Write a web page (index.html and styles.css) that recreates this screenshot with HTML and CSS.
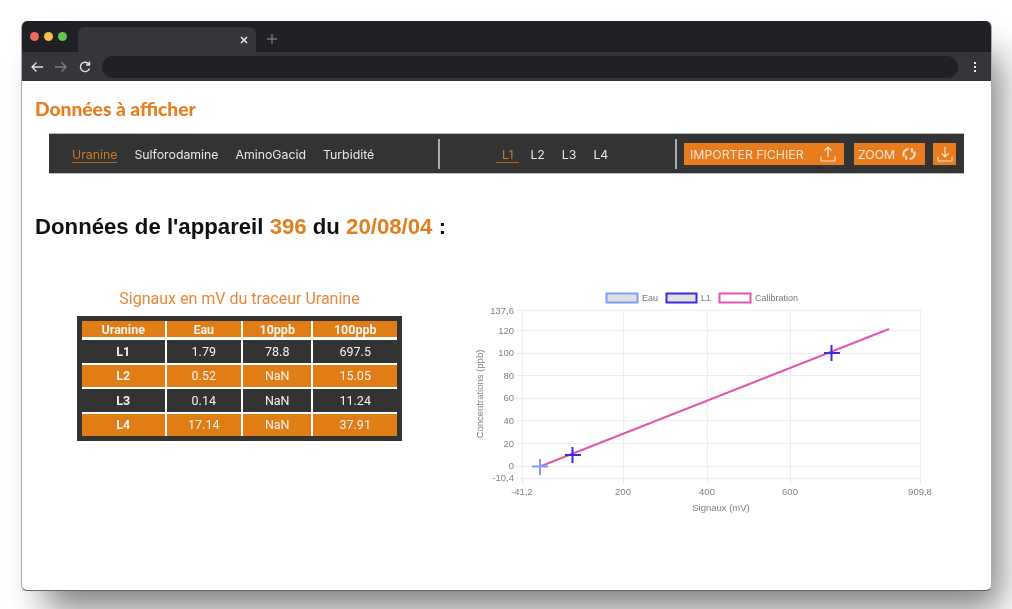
FILE: index.html
```html
<!DOCTYPE html>
<html>
<head>
  <meta charset="utf-8">
  <title>Données à afficher</title>
  <link rel="stylesheet" href="styles.css">
</head>
<body>

  <div class="window">

    <div class="tabbar">
      <div class="dots">
        <span class="dot red"></span>
        <span class="dot yellow"></span>
        <span class="dot green"></span>
      </div>
      <div class="tab">
        <svg class="tab-close" width="8" height="8" viewBox="0 0 8 8"><path d="M1 1l6 6M7 1l-6 6" /></svg>
      </div>
      <svg class="tab-plus" width="12" height="12" viewBox="0 0 12 12"><path d="M6 1v10M1 6h10" /></svg>
    </div>

    <div class="toolbar">
      <svg class="tool" width="14" height="14" viewBox="0 0 14 14"><path d="M13 7H2M6.500 2.500L2 7l4.500 4.500" /></svg>
      <svg class="tool off" width="14" height="14" viewBox="0 0 14 14"><path d="M1 7h11M7.500 2.500L12 7l-4.500 4.500" /></svg>
      <svg class="tool" width="14" height="14" viewBox="0 0 14 14"><path d="M11.500 8.500A4.700 4.700 0 1 1 10.800 4M11.500 1.500V5H8" /></svg>
      <div class="address"></div>
      <div class="kebab"><span></span><span></span><span></span></div>
    </div>

    <div class="page">
      <h1 class="page-title">Données à afficher</h1>

      <div class="nav">
        <div class="nav-tracers">
          <a class="nav-link active">Uranine</a>
          <a class="nav-link">Sulforodamine</a>
          <a class="nav-link">AminoGacid</a>
          <a class="nav-link">Turbidité</a>
        </div>
        <div class="nav-lines">
          <a class="nav-link line active">L1</a>
          <a class="nav-link line">L2</a>
          <a class="nav-link line">L3</a>
          <a class="nav-link line">L4</a>
        </div>
        <div class="nav-actions">
          <button class="btn btn-import">IMPORTER FICHIER
            <svg width="18" height="18" viewBox="0 0 18 18"><path d="M9 12V2M5.500 5.500L9 2l3.500 3.500M2 11.500V15a1 1 0 0 0 1 1h12a1 1 0 0 0 1-1v-3.500" /></svg>
          </button>
          <button class="btn btn-zoom">ZOOM
            <svg width="14" height="14" viewBox="0 0 14 14"><path class="thick" d="M2 9.500A5.200 5.200 0 0 1 6.500 1.900M12 4.500A5.200 5.200 0 0 1 7.500 12.100M9.800 1.200v3.400h-0.300M4.200 12.800V9.400h0.300" /></svg>
          </button>
          <button class="btn btn-save">
            <svg width="18" height="18" viewBox="0 0 18 18"><path d="M9 2v10M5.500 8.500L9 12l3.500-3.500M2 11.500V15a1 1 0 0 0 1 1h12a1 1 0 0 0 1-1v-3.500" /></svg>
          </button>
        </div>
      </div>

      <h2 class="device-title">Données de l'appareil <span class="hl">396</span> du <span class="hl">20/08/04</span> :</h2>

      <div class="results">
        <div class="table-block">
          <div class="table-title">Signaux en mV du traceur Uranine</div>
          <div class="table-frame">
            <table class="signals">
              <tr class="orange head">
                <th class="col-a">Uranine</th><th class="col-b">Eau</th><th class="col-c">10ppb</th><th class="col-d">100ppb</th>
              </tr>
              <tr class="dark">
                <th>L1</th><td>1.79</td><td>78.8</td><td>697.5</td>
              </tr>
              <tr class="orange">
                <th>L2</th><td>0.52</td><td>NaN</td><td>15.05</td>
              </tr>
              <tr class="dark">
                <th>L3</th><td>0.14</td><td>NaN</td><td>11.24</td>
              </tr>
              <tr class="orange">
                <th>L4</th><td>17.14</td><td>NaN</td><td>37.91</td>
              </tr>
            </table>
          </div>
        </div>

        <svg class="chart" width="480" height="240" viewBox="465 285 480 240">
          <!-- legend -->
          <rect class="box" x="606.500" y="293.500" width="31" height="9" stroke="#7f9bff" />
          <text class="legend" x="642" y="301">Eau</text>
          <rect class="box" x="666.500" y="293.500" width="30" height="9" stroke="#3a2be0" />
          <text class="legend" x="701" y="301">L1</text>
          <rect class="box none" x="719.500" y="293.500" width="31" height="9" stroke="#e455b0" />
          <text class="legend" x="755" y="301">Calibration</text>

          <!-- grid -->
          <path class="grid" d="M522.500 310v174M623.500 310v174M707.500 310v174M790.500 310v174M920.500 310v174" />
          <path class="grid" d="M516 310.500h405M516 330.500h405M516 353.500h405M516 375.500h405M516 398.500h405M516 420.500h405M516 443.500h405M516 466.500h405M516 478.500h405" />

          <!-- y ticks -->
          <text class="tick end" x="514" y="314">137,6</text>
          <text class="tick end" x="514" y="334">120</text>
          <text class="tick end" x="514" y="356">100</text>
          <text class="tick end" x="514" y="379">80</text>
          <text class="tick end" x="514" y="401">60</text>
          <text class="tick end" x="514" y="424">40</text>
          <text class="tick end" x="514" y="447">20</text>
          <text class="tick end" x="514" y="469">0</text>
          <text class="tick end" x="514" y="481">-10,4</text>

          <!-- x ticks -->
          <text class="tick mid" x="522" y="495">-41,2</text>
          <text class="tick mid" x="623" y="495">200</text>
          <text class="tick mid" x="707" y="495">400</text>
          <text class="tick mid" x="790" y="495">600</text>
          <text class="tick mid" x="920" y="495">909,8</text>

          <text class="tick mid" x="721" y="511">Signaux (mV)</text>
          <text class="tick mid" transform="translate(483 394) rotate(-90)">Concentrations (ppb)</text>

          <!-- series -->
          <path class="calibration" d="M540 466.500L889 329" />
          <path class="cross" stroke="#7f9bff" d="M532 466.500h16M540 459v16" />
          <path class="cross" stroke="#3a2be0" d="M565 455h16M572.500 447v16" />
          <path class="cross" stroke="#3a2be0" d="M824 353h16M831.500 345v16" />
        </svg>
      </div>
    </div>
  </div>

</body>
</html>
```

FILE: styles.css
```css
html, body {
  height: 100%;
  overflow: hidden;
}
body {
  margin: 0;
  padding: 21px 20px 0 21px;
  background: #fff;
  font-family: "Inter", sans-serif;
}
.window {
  height: 570px;
  border-radius: 6px;
  background: #fff;
  border: 1px solid #aaa;
  border-top: 0;
  border-bottom-color: #666;
  box-shadow: 16px 26px 34px -8px rgba(0, 0, 0, 0.5);
  overflow: hidden;
  box-sizing: border-box;
  filter: blur(0.35px);
}

/* browser chrome */
.tabbar {
  height: 31px;
  background: #202124;
  display: flex;
  align-items: flex-end;
}
.dots {
  width: 56px;
  height: 31px;
  display: flex;
  gap: 5px;
  padding: 11px 0 0 8px;
  box-sizing: border-box;
}
.dot {
  width: 9px;
  height: 9px;
  border-radius: 50%;
}
.red { background: #ed6a5e; }
.yellow { background: #f5bf4f; }
.green { background: #61c554; }
.tab {
  width: 178px;
  height: 25px;
  background: #35363a;
  border-radius: 6px 6px 0 0;
  display: flex;
  align-items: center;
  justify-content: flex-end;
  padding-right: 8px;
  box-sizing: border-box;
}
.tab-close path {
  stroke: #e8eaed;
  stroke-width: 1.5;
  fill: none;
}
.tab-plus {
  margin: 0 0 7px 10px;
}
.tab-plus path {
  stroke: #75777b;
  stroke-width: 1.3;
  fill: none;
}
.toolbar {
  height: 29px;
  background: #35363a;
  display: flex;
  align-items: center;
  padding: 0 11px 0 8px;
}
.tool {
  margin-right: 10px;
}
.tool path {
  stroke: #dfe1e5;
  stroke-width: 1.4;
  fill: none;
}
.tool.off path {
  stroke: #7d7f83;
}
.address {
  flex: 1;
  height: 22px;
  border-radius: 11px;
  background: #202124;
}
.kebab {
  display: flex;
  flex-direction: column;
  gap: 2px;
  margin-left: 16px;
  margin-right: 4px;
}
.kebab span {
  width: 2px;
  height: 2px;
  background: #e8eaed;
}

/* page */
.page {
  padding: 0 27px 0 13px;
}
.page-title {
  margin: 18px 0 0;
  font-family: "Lato", sans-serif;
  font-size: 19.200px;
  line-height: 20px;
  font-weight: 900;
  color: #e87c1e;
}
.nav {
  margin: 14px 0 0 14px;
  height: 41px;
  background: #333;
  display: flex;
  align-items: center;
  color: #e8e8e8;
  font-size: 12.300px;
  line-height: 15px;
  border-top: 1px solid #bbb;
  border-bottom: 1px solid #bbb;
  box-sizing: border-box;
}
.nav-link {
  padding-top: 2px;
  border-bottom: 1px solid transparent;
}
.nav-link.active {
  color: #d07a28;
  border-bottom-color: #b5651d;
}
.nav-tracers {
  width: 389px;
  box-sizing: border-box;
  padding-left: 23px;
  display: flex;
  gap: 17px;
}
.nav-lines {
  width: 239px;
  height: 30px;
  box-sizing: border-box;
  padding-left: 62px;
  display: flex;
  align-items: center;
  gap: 17px;
  border-left: 2px solid #aaa;
  border-right: 2px solid #aaa;
}
.nav-link.line {
  padding-left: 5px;
  margin-left: -5px;
}
.nav-link.line.active {
  padding-left: 6px;
  padding-right: 6px;
  margin-left: -6px;
  margin-right: -6px;
}
.nav-actions {
  display: flex;
  margin-left: 7px;
}
.btn {
  height: 22px;
  border: 0;
  padding: 2px 0 0;
  background: #e87c1e;
  color: #f6e3d0;
  font-family: "Inter", sans-serif;
  font-size: 12.300px;
  display: flex;
  align-items: center;
  justify-content: space-between;
  box-sizing: border-box;
}
.btn svg {
  margin-top: -2px;
}
.btn svg path {
  stroke: #f6e3d0;
  stroke-width: 1.2;
  fill: none;
}
.btn svg path.thick {
  stroke-width: 2;
}
.btn-import {
  width: 160px;
  padding-left: 6px;
  padding-right: 7px;
}
.btn-zoom {
  width: 71px;
  margin-left: 10px;
  padding-left: 4px;
  padding-right: 9px;
}
.btn-save {
  width: 23px;
  margin-left: 8px;
  justify-content: center;
}
.device-title {
  margin: 40px 0 0;
  font-family: "Liberation Sans", sans-serif;
  font-size: 22.200px;
  line-height: 26px;
  font-weight: 700;
  color: #111;
}
.hl {
  color: #e07f1f;
}
.results {
  display: flex;
  margin-top: 45px;
}
.table-block {
  width: 325px;
  margin-left: 42px;
  padding-top: 5px;
}
.table-title {
  text-align: center;
  font-family: "Roboto", sans-serif;
  font-size: 16px;
  line-height: 18px;
  color: #e8873a;
}
.table-frame {
  margin-top: 8px;
  border: 5px solid #333;
  background: #333;
}
.signals {
  width: 315px;
  border-collapse: collapse;
  border-style: hidden;
  table-layout: fixed;
  font-family: "Roboto", sans-serif;
  font-size: 12.500px;
  text-align: center;
  color: #f2f2f2;
}
.signals th, .signals td {
  border: 2px solid #fff;
  padding: 0;
  height: 22.500px;
}
.signals th {
  font-weight: 700;
}
.signals .head th {
  height: 16px;
  border-bottom-width: 3px;
}
.col-a { width: 82px; }
.col-b { width: 74px; }
.col-c { width: 68px; }
.col-d { width: 83px; }
.orange { background: #e07d14; }
.dark { background: #333; }
.chart {
  margin-left: 63px;
  display: block;
}
.chart text {
  font-family: "Liberation Sans", sans-serif;
}
.legend {
  font-size: 9px;
  fill: #777;
}
.tick {
  font-size: 9.500px;
  fill: #808080;
}
.end { text-anchor: end; }
.mid { text-anchor: middle; }
.box {
  fill: #e0e0e0;
  stroke-width: 2;
}
.box.none {
  fill: #fff;
}
.grid {
  stroke: #ececec;
  stroke-width: 1;
  fill: none;
}
.calibration {
  stroke: #e455b0;
  stroke-width: 2;
  fill: none;
}
.cross {
  stroke-width: 2;
  fill: none;
}
```
